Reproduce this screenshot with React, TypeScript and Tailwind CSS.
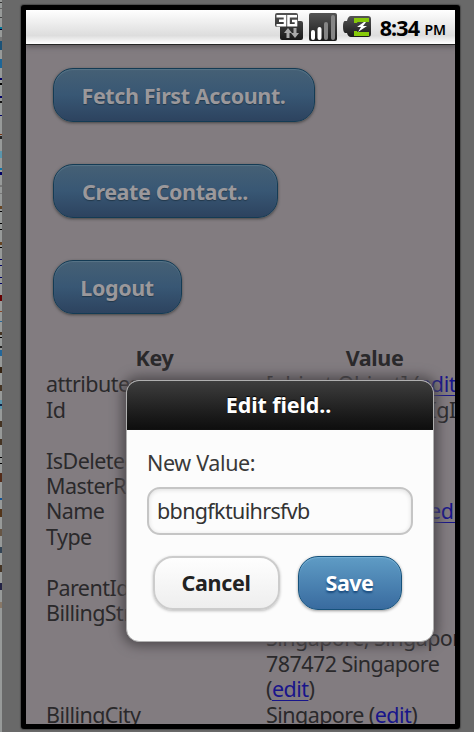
import type { ReactNode } from "react";

// Slivers of the window behind the emulator: [y, height, colour]
const slivers: [number, number, string][] = [
  [2, 1, "#333"], [8, 1, "#666"], [17, 1, "#444"], [27, 2, "#079"], [29, 1, "#003"],
  [37, 4, "#777"], [41, 9, "#1b5277"], [59, 9, "#1c6698"], [78, 2, "#006"], [83, 2, "#000"],
  [96, 2, "#006"], [101, 2, "#111"], [115, 1, "#006"], [134, 1, "#731"], [136, 3, "#222"],
  [151, 7, "#5a96ad"], [168, 2, "#17a"], [172, 3, "#006"], [185, 2, "#777"], [193, 1, "#777"],
  [206, 3, "#642"], [211, 1, "#000"], [223, 1, "#000"], [229, 1, "#000"], [242, 3, "#642"],
  [247, 1, "#000"], [259, 1, "#006"], [265, 1, "#006"], [277, 1, "#006"], [283, 1, "#006"],
  [295, 6, "#600"], [311, 1, "#842"], [321, 1, "#269"], [332, 3, "#432"], [337, 1, "#000"],
  [346, 2, "#222"], [350, 6, "#269"], [367, 6, "#321"], [385, 6, "#432"], [400, 9, "#5a96ad"],
  [404, 2, "#124"], [421, 6, "#432"], [439, 6, "#432"], [457, 1, "#000"], [463, 1, "#000"],
  [473, 9, "#532b18"], [498, 2, "#159"], [509, 8, "#53351a"], [529, 7, "#654"],
  [547, 6, "#345"], [565, 7, "#432"], [583, 7, "#224"], [602, 6, "#887867"],
];

function BlueButton({ children, className }: { children: ReactNode; className: string }) {
  return (
    <button
      className={`flex h-[54px] items-center justify-center rounded-[20px] border border-[#143b54] bg-linear-to-b from-[#456075] via-[#385774] to-[#2d435f] pt-px pr-px text-[21.500px] font-bold tracking-[-0.4px] text-[#9b989b] shadow-[0_1px_3px_#444,inset_0_1px_1px_#587588] [text-shadow:0_1px_1px_#22384b] ${className}`}
    >
      {children}
    </button>
  );
}

const Edit = () => <span className="text-[#18158b] underline decoration-1 underline-offset-[3px]">edit</span>;

function Row({ name, children, className = "" }: { name: string; children: ReactNode; className?: string }) {
  return (
    <div className="flex">
      <div className="w-[220px] shrink-0">{name}</div>
      <div className={`whitespace-nowrap ${className}`}>{children}</div>
    </div>
  );
}

function StatusIcons() {
  return (
    <svg width="98" height="30" viewBox="0 0 98 30" className="shrink-0">
      <defs>
        <linearGradient id="dark" x1="0" y1="0" x2="0" y2="1">
          <stop stopColor="#555" />
          <stop offset="1" stopColor="#181818" />
        </linearGradient>
      </defs>
      <path d="M2 1h19q2 0 2 2v6h3q2 0 2 2v15q0 2-2 2H7q-2 0-2-2V15H2q-2 0-2-2V3q0-2 2-2Z" fill="url(#dark)" />
      <path d="M1.500 4.200H10v9H1.500M4 8.700h6M22 4.200h-8.500v9H21V9h-4" fill="none" stroke="white" strokeWidth="2.600" />
      <path d="m13 16 4 5h-2.500v5h-3v-5H9ZM20 26l-4-5h2.500v-5h3v5H24Z" fill="#aaa" />
      <rect x="34" y="1" width="28" height="28" rx="2" fill="url(#dark)" />
      <g strokeWidth="4" strokeLinecap="round">
        <path d="M38 20v6M44.500 17v9" stroke="white" />
        <path d="M51 12v14M58 5v21" stroke="#858585" />
      </g>
      <path d="M76 4h17q3 0 3 3v15q0 3-3 3H76q-3 0-4-4h-2q-2-1-2-6.500T70 9h2q1-5 4-5Z" fill="url(#dark)" />
      <path d="M79 6h15v4H83q-1 0-1 1h-3ZM79 24h15v-4H83q-1 0-1-1h-3Z" fill="#86c909" />
      <path d="m89 10-7 5h4l-3 5 9-6h-4l3-4Z" fill="white" />
    </svg>
  );
}

export default function App() {
  return (
    <div className="relative flex h-[732px] w-[474px] overflow-hidden bg-[#696969] pt-[5px] font-['Noto_Sans','Open_Sans',sans-serif] leading-none">
      <svg width="2" height="732" className="absolute top-0 left-0">
        <rect width="2" height="732" fill="#979a99" />
        {slivers.map(([y, h, c]) => (
          <rect key={y} y={y} width="2" height={h} fill={c} />
        ))}
      </svg>

      <div className="relative ml-[21px] h-[724px] w-[439px] rounded-[3px] border-[5px] border-black bg-[#827c80] shadow-[0_0_1px_1px_#4b4b4b]">
        <div className="flex h-full flex-col overflow-hidden">
          <header className="flex h-[35px] shrink-0 items-start justify-end border-b border-[#252525] bg-linear-to-b from-white via-[#dddddd] via-75% to-white pt-[2px] pr-[9px] text-black shadow-[0_2px_5px_#5b575a]">
            <div className="mr-[7px] h-[30px] w-[98px]"><StatusIcons /></div>
            <span className="pt-[5px] text-[21.500px] font-bold tracking-[-0.8px]">8:34</span>
            <span className="ml-[5px] pt-[11px] text-[14px] font-semibold">PM</span>
          </header>

          <main className="flex shrink-0 flex-col items-start pt-[23px] pl-[27px]">
            <BlueButton className="w-[262px]">Fetch First Account.</BlueButton>
            <BlueButton className="mt-[42px] w-[225px]">Create Contact..</BlueButton>
            <BlueButton className="mt-[42px] w-[129px]">Logout</BlueButton>
          </main>

          <section className="w-[600px] shrink-0 pt-[32px] pl-[20px] text-[21.500px] leading-[25.400px] tracking-[-0.550px] text-[#2a292b]">
            <div className="-mt-px mb-px flex font-bold tracking-[-0.4px]">
              <div className="w-[217px] text-center">Key</div>
              <div className="w-[223px] text-center">Value</div>
            </div>
            <Row name="attributes" className="tracking-[-0.38px]">[object Object] (<Edit />)</Row>
            <Row name="Id" className="tracking-[-0.55px]">0019000000DmEIgIAN<br />(<Edit />)</Row>
            <Row name="IsDeleted">false (<Edit />)</Row>
            <Row name="MasterRecordId">null (<Edit />)</Row>
            <Row name="Name" className="tracking-[-0.38px]">Salesforce Corp (<Edit />)</Row>
            <Row name="Type">Customer - Direct<br />(<Edit />)</Row>
            <Row name="ParentId">null (<Edit />)</Row>
            <Row name="BillingStreet">
              9 Temasek Blvd<br />Singapore, Singapore<br />787472 Singapore<br />(<Edit />)
            </Row>
            <Row name="BillingCity">
              Singapore (<span className="text-[#18158b]">edit</span>)
            </Row>
          </section>
        </div>

        <div
          role="dialog"
          className="absolute top-[370px] left-[100px] h-[262px] w-[308px] overflow-hidden rounded-[13px] border border-[#b0b0b0] bg-[#fcfcfc] shadow-[0_0_12px_4px_#504c4f]"
        >
          <h1 className="flex h-[49px] items-center justify-center border-b border-[#111] bg-linear-to-b from-[#3e3e3e] to-[#0e0e0e] pr-[3px] text-[21.500px] font-bold tracking-[-0.1px] text-white [text-shadow:0_-1px_1px_#000]">
            Edit field..
          </h1>
          <div className="px-5 pt-[21px]">
            <label className="block h-6 text-[21.500px] leading-6 tracking-[-0.35px] text-[#393939]">New Value:</label>
            <div className="mt-[12px] flex h-[48px] w-[266px] items-center rounded-[13px] border-2 border-[#c5c5c5] pb-px pl-2 text-[21.500px] tracking-[-0.65px] text-[#333] shadow-[inset_0_1px_4px_#ddd]">
              bbngfktuihrsfvb
            </div>
            <div className="mt-[21px] flex gap-[18px] pl-[6px]">
              <button className="flex h-[54px] w-[127px] items-center justify-center rounded-[20px] border-2 border-[#ccc] bg-linear-to-b from-[#fefefe] to-[#eeeeee] pr-px text-[21.500px] font-bold tracking-[-0.3px] text-[#222] shadow-[0_1px_3px_#bbb]">
                Cancel
              </button>
              <button className="flex h-[54px] w-[104px] items-center justify-center rounded-[20px] border border-[#16527b] bg-linear-to-b from-[#5f9cc5] to-[#396b9f] pr-px text-[21.500px] font-bold tracking-[-0.5px] text-white shadow-[0_1px_3px_#999,inset_0_1px_1px_#77b1d5] [text-shadow:0_2px_2px_#194b7e]">
                Save
              </button>
            </div>
          </div>
        </div>
      </div>
    </div>
  );
}
